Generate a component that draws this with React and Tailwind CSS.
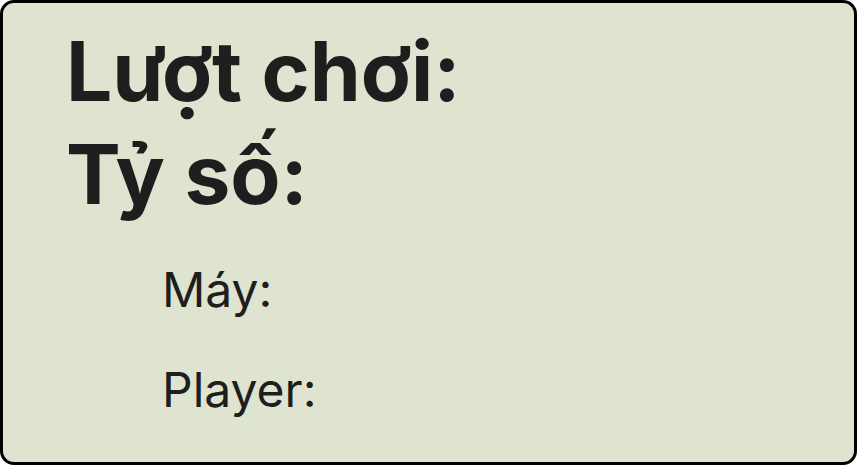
export default function App() {
  return (
    <div className="w-[857px] h-[465px] bg-white">
      <div
        className="w-full h-full box-border border-[3px] border-black rounded-[14px] bg-[#dee4cf] text-[#1e1e1e] pt-[17px] pl-[63px]"
        style={{ fontFamily: 'Inter, "Noto Sans", sans-serif' }}
      >
        <h1 className="text-[82px] leading-[103px] font-bold">Lượt chơi:</h1>
        <h2 className="text-[82px] leading-[103px] font-bold">Tỷ số:</h2>
        <div className="pl-[96px] mt-[34px] flex flex-col gap-[40px]">
          <p className="text-[48px] leading-[60px]">Máy:</p>
          <p className="text-[48px] leading-[60px]">Player:</p>
        </div>
      </div>
    </div>
  );
}
